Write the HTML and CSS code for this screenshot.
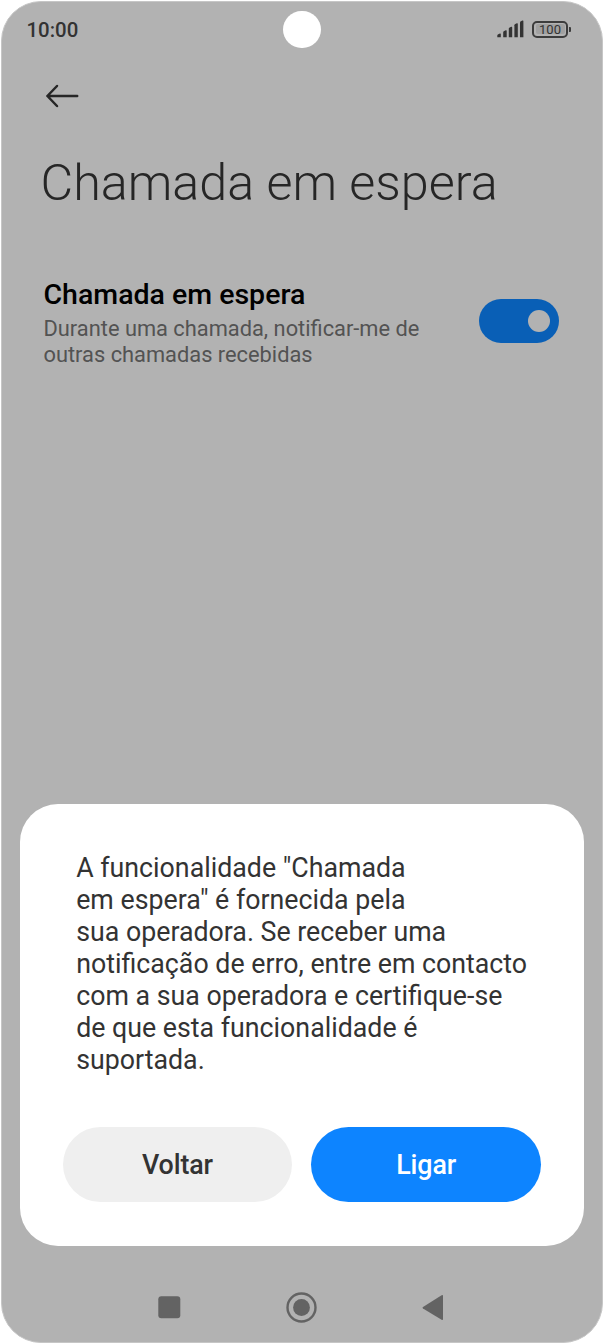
FILE: index.html
```html
<!DOCTYPE html>
<html lang="pt">
<head>
  <meta charset="UTF-8" />
  <title>Chamada em espera</title>
  <link rel="stylesheet" href="styles.css">
</head>
<body>
  <div class="phone">
    <header class="status-bar">
      <span class="clock">10:00</span>
      <span class="camera"></span>
      <div class="status-icons">
        <svg class="signal" width="28" height="18" viewBox="0 0 28 18">
          <path d="M0.3 17.2v-1.6q0-0.9 1-1.3l1.6-0.8q0.9-0.3 0.9 0.6v3.1z" />
          <path d="M6.2 17.2v-5q0-0.9 1-1.3l1.5-0.7q1-0.3 1 0.6v6.4z" />
          <path d="M11.8 17.2v-8.4q0-0.8 0.9-1.3l1.5-0.7q1-0.3 1 0.6v9.8z" />
          <path d="M17.4 17.2V5.3q0-0.8 0.9-1.3l1.5-0.7q1-0.3 1 0.6v13.3z" />
          <path d="M23 17.2V2.5q0-0.8 0.9-1.3l1.5-0.7q1-0.3 1 0.6v16.1z" />
        </svg>
        <div class="battery"><span class="battery-level">100</span></div>
        <span class="battery-tip"></span>
      </div>
    </header>

    <svg class="back" width="34" height="24" viewBox="0 0 34 24">
      <path d="M12 2L2.4 12l9.6 10M2.4 12h29.8" />
    </svg>

    <h1>Chamada em espera</h1>

    <div class="setting">
      <div class="setting-text">
        <h2>Chamada em espera</h2>
        <p>Durante uma chamada, notificar-me de<br>outras chamadas recebidas</p>
      </div>
      <span class="toggle"><span class="knob"></span></span>
    </div>

    <div class="dialog">
      <p class="message">A funcionalidade "Chamada<br>em espera" é fornecida pela<br>sua operadora. Se receber uma<br>notificação de erro, entre em contacto<br>com a sua operadora e certifique-se<br>de que esta funcionalidade é<br>suportada.</p>
      <div class="buttons">
        <button class="btn">Voltar</button>
        <button class="btn primary">Ligar</button>
      </div>
    </div>

    <nav class="nav-bar">
      <svg width="32" height="32" viewBox="0 0 32 32">
        <rect x="5.3" y="5.3" width="22" height="22" rx="3" />
      </svg>
      <svg width="32" height="32" viewBox="0 0 32 32">
        <circle class="ring" cx="16.5" cy="16.5" r="14" />
        <circle cx="16.5" cy="16.5" r="8.4" />
      </svg>
      <svg width="32" height="32" viewBox="0 0 32 32">
        <path d="M6 15.9L24.6 4.2q1.4-0.8 1.4 0.8v23q0 1.6-1.4 0.8L6 17.5q-1.1-0.8 0-1.6z" />
      </svg>
    </nav>
  </div>
</body>
</html>
```
FILE: styles.css
```css
* {
  box-sizing: border-box;
}
body {
  margin: 0;
  padding: 1px;
  background: #fff;
  font-family: Roboto, sans-serif;
}
h1, h2, p {
  margin: 0;
  white-space: nowrap;
}
.phone {
  display: flex;
  flex-direction: column;
  width: 602px;
  height: 1342px;
  background: #b2b2b2;
  border: 1px solid #c6c6c6;
  border-radius: 40px;
}

/* status bar */
.status-bar {
  display: grid;
  grid-template-columns: 1fr 38px 1fr;
  align-items: center;
  height: 55px;
  padding: 0 31px 0 24.5px;
}
.clock {
  font-size: 20.4px;
  font-weight: 500;
  color: #333;
}
.camera {
  width: 37.4px;
  height: 37.4px;
  margin-left: 3.4px;
  border-radius: 50%;
  background: #fff;
}
.status-icons {
  display: flex;
  align-items: center;
  justify-content: flex-end;
  margin-top: -1px;
}
.signal {
  margin-right: 7px;
  fill: #333;
}
.battery {
  width: 36px;
  height: 17px;
  padding: 1.5px;
  border: 2px solid #3c3c3c;
  border-radius: 5px;
}
.battery-level {
  display: block;
  height: 10px;
  border-radius: 2px;
  background: #a0a0a0;
  color: #333;
  font-size: 13px;
  line-height: 11px;
  text-align: center;
}
.battery-tip {
  width: 2px;
  height: 5px;
  margin-left: 1px;
  border-radius: 0 1px 1px 0;
  background: #3c3c3c;
}

.back {
  margin: 27px 0 0 43px;
  fill: none;
  stroke: #262626;
  stroke-width: 2.5;
  stroke-linecap: round;
  stroke-linejoin: round;
}
h1 {
  margin: 45px 0 0 38.5px;
  font-size: 50.3px;
  font-weight: 300;
  line-height: 60px;
  color: #262626;
}

/* setting row */
.setting {
  display: flex;
  align-items: center;
  justify-content: space-between;
  margin-top: 64px;
  padding: 0 43px 0 41.5px;
}
h2 {
  font-size: 28.5px;
  font-weight: 500;
  line-height: 36px;
  color: #000;
}
.setting p {
  margin-top: 3px;
  font-size: 21.84px;
  line-height: 26px;
  color: #535353;
}
.toggle {
  display: flex;
  align-items: center;
  justify-content: flex-end;
  width: 80px;
  height: 44px;
  margin-top: -3px;
  padding-right: 9px;
  border-radius: 22px;
  background: #095fb6;
}
.knob {
  width: 22px;
  height: 22px;
  border-radius: 50%;
  background: #b2b2b2;
}

/* dialog */
.dialog {
  height: 442px;
  margin: auto 18px 0 17.6px;
  padding: 48px 43px 0;
  border-radius: 38px;
  background: #fff;
}
.message {
  padding-left: 13.6px;
  font-size: 26.75px;
  line-height: 32px;
  color: #333;
}
.buttons {
  display: flex;
  gap: 19px;
  margin-top: 51px;
}
.btn {
  flex: 1;
  height: 74.5px;
  padding: 2px 0 0;
  border: none;
  border-radius: 38px;
  background: #efefef;
  color: #333;
  font-family: inherit;
  font-size: 26.8px;
  font-weight: 500;
  letter-spacing: -0.1px;
}
.btn.primary {
  background: #0d84ff;
  color: #fff;
}

/* navigation bar */
.nav-bar {
  display: flex;
  justify-content: center;
  gap: 100px;
  height: 96px;
  padding: 45px 2px 0 0;
  fill: #636363;
}
.ring {
  fill: none;
  stroke: #636363;
  stroke-width: 2.4;
}
```
